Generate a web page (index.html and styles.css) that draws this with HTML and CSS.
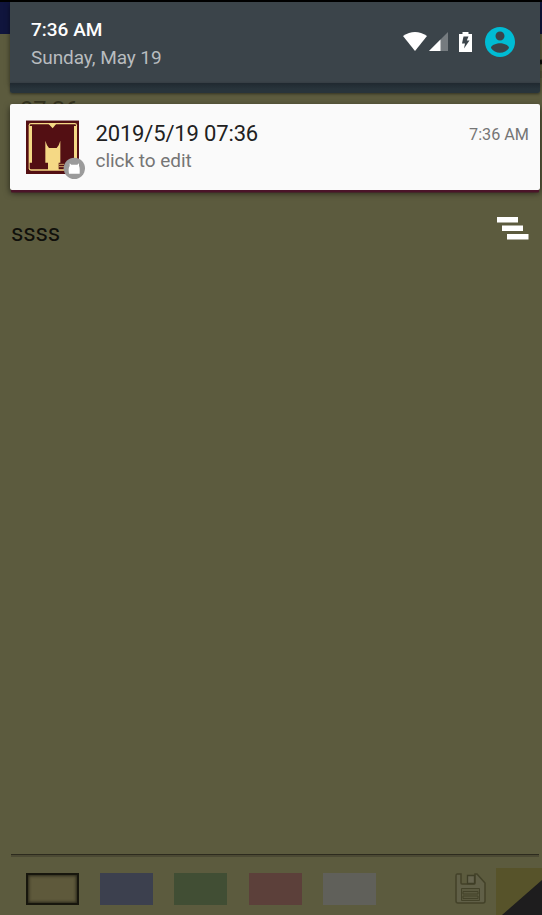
FILE: index.html
```html
<!DOCTYPE html>
<html lang="en">
<head>
<meta charset="utf-8">
<title>Memo notification</title>
<link rel="stylesheet" href="styles.css">
</head>
<body>
<div class="screen">
  <main class="memo">
    <div class="app-bar"></div>
    <div class="memo-head"><span>07:36</span><svg class="edge-icon" viewBox="0 0 2 22"><path d="M0 1 2 5" fill="none" stroke="#0b0b08" stroke-width="3"/><path d="M1 12v7" stroke="#4a4932" stroke-width="1"/></svg></div>
    <div class="memo-text">ssss</div>
    <footer class="toolbar">
      <div class="swatch selected"></div>
      <div class="swatch blue"></div>
      <div class="swatch green"></div>
      <div class="swatch red"></div>
      <div class="swatch gray"></div>
      <svg class="save" viewBox="0 0 32 32"><path d="M2 1H6V10Q6 11 7 11H19Q20 11 20 10V1H22L30 10V28Q30 30 28 30H3Q1 30 1 28V3Q1 1 2 1Z" fill="#605f47" stroke="#434229" stroke-width="1.500"/><path d="M12.500 2.500h7v8h-7z" fill="#66644f" stroke="#3f3e27" stroke-width="1.300"/><path d="M6.500 15.500h18v12h-18zM8 18.500h15v2.500H8zM8 23h15v2.500H8z" fill="#5a593f" stroke="#434229"/></svg>
      <svg class="corner" viewBox="0 0 46 47"><path fill="#57532a" d="M0 0h46v47H0z"/><path fill="#1e1d1e" d="M46 12v35H6z"/></svg>
    </footer>
  </main>
  <div class="shade">
    <header class="status">
      <div class="clock"><div class="time">7:36 AM</div><div class="date">Sunday, May 19</div></div>
      <svg class="wifi" viewBox="0 0 24 19"><path fill="#fff" d="M0 4Q12-4 24 4L12 19Z"/></svg>
      <svg class="signal" viewBox="0 0 19 19"><path fill="#757b7f" d="M19 0v19H0z"/><path fill="#fff" d="M11.500 7.500V19H0z"/></svg>
      <svg class="battery" viewBox="0 0 13 20"><path fill="#fff" d="M0 2H3.500V0H9.500V2H13V20H0Z"/><path fill="#3b444a" d="M4.500 4.500H9.500L7.800 8.500H10.500L5 16.500 6 11.500H3Z"/></svg>
      <svg class="avatar" viewBox="2 2 20 20"><path fill="#00bcd4" d="M12 2C6.480 2 2 6.480 2 12s4.480 10 10 10 10-4.480 10-10S17.520 2 12 2zm0 3c1.660 0 3 1.340 3 3s-1.340 3-3 3-3-1.340-3-3 1.340-3 3-3zm0 14.200c-2.500 0-4.710-1.280-6-3.220.030-1.990 4-3.080 6-3.080 1.990 0 5.970 1.090 6 3.080-1.290 1.940-3.500 3.220-6 3.220z"/></svg>
    </header>
    <div class="status-foot"></div>
    <article class="notice">
      <svg class="app-icon" viewBox="0 0 180 177">
        <path fill="#530f13" d="M0 0h159v162H0z"/><path fill="#ad8d8e" d="M0 0h159v3H0z"/>
        <rect x="8" y="9" width="145" height="143" rx="7" fill="#f5d985"/>
        <rect x="11" y="13" width="139" height="135" rx="4" fill="#530f13"/>
        <path fill="#f5d985" d="M9 18h9v110H9zM144 18h8v112h-8zM67 11H91L80 25ZM58 62 63 76 69 84H92L98 76 103 62V128H98V150H66V128H58Z"/>
        <path stroke="#c99f62" stroke-width="3" d="M99 133h15M99 140h15"/>
        <circle cx="145" cy="145" r="32" fill="#9b9b9b"/>
        <path fill="#fff" d="M131 130 136 134H154L159 130V138Q162 143 161 161H129Q126 145 131 138Z"/>
      </svg>
      <div class="notice-copy"><div class="title">2019/5/19 07:36</div><div class="detail">click to edit</div></div>
      <time>7:36 AM</time>
    </article>
    <svg class="clear" viewBox="0 0 32 23"><path fill="#fff" d="M0 0h21v5.500H0zM5 8.500h21V14H5zM10 17h21.500v5.500H10z"/></svg>
  </div>
</div>
</body>
</html>
```
FILE: styles.css
```css
* { box-sizing: border-box; }
body { margin: 0; font-family: Roboto, "Liberation Sans", sans-serif; }
svg { display: block; flex: none; }
.screen { position: relative; width: 542px; height: 915px; overflow: hidden; background: #5c5b3e; border-top: 2px solid #000; }
.memo { height: 913px; display: flex; flex-direction: column; }
.app-bar { height: 32px; background: #10153d; }
.memo-head { height: 180px; padding: 62px 0 0 20px; display: flex; justify-content: space-between; font-size: 23.500px; line-height: 28px; color: #35341f; }
.edge-icon { width: 2px; height: 22px; margin-top: -37px; }
.memo-text { flex: 1; padding: 5px 11px 0; font-size: 24px; line-height: 28px; letter-spacing: -.15px; color: #10100b; }
.toolbar { position: relative; height: 61px; padding: 19px 0 0 26px; display: flex; gap: 21.200px; }
.toolbar::before { content: ""; position: absolute; left: 11px; right: 3px; top: 0; height: 2px; background: #4b4933; border-top: 1px solid #2d2b1e; }
.swatch { flex: none; width: 53px; height: 32px; }
.selected { background: #5e593b; border: 2px solid #17160d; box-shadow: inset 0 0 3px 1px #29271a; }
.blue { background: #3c404e; }
.green { background: #414e34; }
.red { background: #5c403a; }
.gray { background: #60605a; }
.save { width: 32px; height: 32px; margin-left: 58px; }
.corner { width: 46px; height: 47px; margin: -5px 0 0 -12.200px; }
.shade { position: absolute; left: 10px; top: 0; width: 530px; }
.status { height: 81px; padding: 0 25px 0 21px; display: flex; background: #3b444a; box-shadow: 0 2px 5px #0008; }
.clock { flex: 1; padding-top: 16px; }
.time { font-size: 19px; font-weight: 500; line-height: 24px; color: #fff; }
.date { margin-top: 4px; font-size: 19px; line-height: 24px; letter-spacing: -.06px; color: #b8bcbf; }
.wifi { width: 24px; height: 19px; margin: 30px 2px 0 0; }
.signal { width: 19px; height: 19px; margin: 30px 11px 0 0; }
.battery { width: 13px; height: 20px; margin: 30px 13px 0 0; }
.avatar { width: 30px; height: 30px; margin-top: 25px; }
.status-foot { height: 10px; border-radius: 0 0 2px 2px; background: linear-gradient(#202930, #28343b 60%); box-shadow: 0 1px 3px #0007; }
.notice { height: 86px; margin-top: 11px; padding: 16px 11px 0 16px; display: flex; background: #fafafa; border-radius: 2px; box-shadow: 0 3.500px 0 -1px #4b1429, 0 3px 6px #0009; }
.app-icon { width: 60px; height: 59px; }
.notice-copy { flex: 1; padding: 1px 0 0 9.500px; white-space: nowrap; }
.title { font-size: 22px; line-height: 26px; letter-spacing: -.16px; color: #212121; }
.detail { margin-top: 2px; font-size: 19px; line-height: 24px; letter-spacing: -.04px; color: #757575; }
time { padding-top: 5px; font-size: 16.200px; line-height: 20px; color: #757575; }
.clear { width: 32px; height: 23px; margin: 26.500px 11px 0 auto; }
```
